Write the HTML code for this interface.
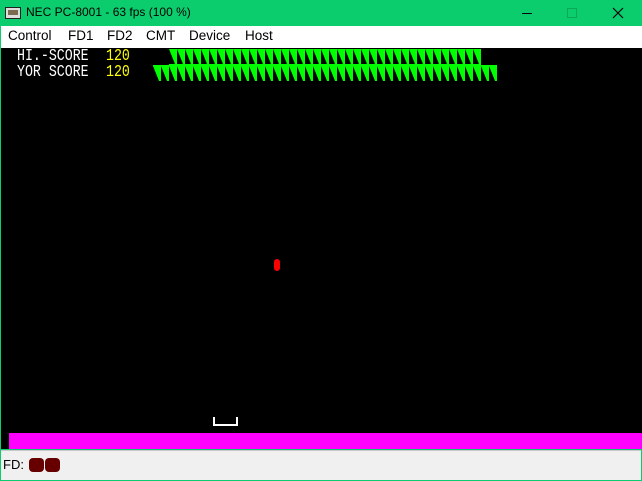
<!DOCTYPE html>
<html><head><meta charset="utf-8"><style>
*{margin:0;padding:0;box-sizing:border-box}
body{width:642px;height:481px;overflow:hidden;background:#0ccd6e;position:relative;font-family:"Segoe UI","Liberation Sans",sans-serif}
.title{position:absolute;left:0;top:0;width:642px;height:26px;background:#0ccd6e;font-size:12px;color:#000}
.menu{position:absolute;left:1px;top:26px;width:641px;height:22px;background:#fff;font-size:13.5px}
.menu span{position:absolute;top:2px}
.screen{position:absolute;left:1px;top:48px;width:641px;height:401px;background:#000}
.status{position:absolute;left:1px;top:450px;width:640px;height:30px;background:#f0f0f0;border-top:1px solid #c8c8c8;font-size:13px}
.pix{position:absolute;font-family:"Liberation Mono",monospace;font-size:17px;line-height:16px;transform:scaleX(0.78);transform-origin:left top;letter-spacing:0}
</style></head><body>
<div class="title">
<svg style="position:absolute;left:5px;top:7px" width="16" height="12"><rect x="0.5" y="0.5" width="15" height="11" fill="#ddd" stroke="#222"/><rect x="3" y="3" width="10" height="5" fill="#7a6a50"/></svg>
<span style="position:absolute;left:26px;top:5px">NEC PC-8001 - 63 fps (100 %)</span>
<div style="position:absolute;left:522px;top:13px;width:10px;height:1px;background:#000"></div>
<div style="position:absolute;left:567px;top:8px;width:10px;height:10px;border:1px solid #0aa858"></div>
<svg style="position:absolute;left:612px;top:7px" width="12" height="12"><path d="M1 1L11 11M11 1L1 11" stroke="#000" stroke-width="1.2"/></svg>
</div>
<div class="menu">
<span style="left:7px">Control</span><span style="left:67px">FD1</span><span style="left:106px">FD2</span><span style="left:145px">CMT</span><span style="left:188px">Device</span><span style="left:244px">Host</span>
</div>
<div class="screen">
<div class="pix" style="left:16px;top:1px;color:#fff">HI.-SCORE</div>
<div class="pix" style="left:105px;top:1px;color:#ff0">120</div>
<div class="pix" style="left:16px;top:17px;color:#fff">YOR SCORE</div>
<div class="pix" style="left:105px;top:17px;color:#ff0">120</div>
<svg style="position:absolute;left:0;top:0" width="641" height="40">
<defs><pattern id="t" width="8" height="16" patternUnits="userSpaceOnUse"><rect width="8" height="16" fill="#00ff00"/><polygon points="0,1 0,16 6,16" fill="#000"/></pattern>
<pattern id="t2" x="0" y="17" width="8" height="16" patternUnits="userSpaceOnUse"><rect width="8" height="16" fill="#00ff00"/><polygon points="0,1 0,16 6,16" fill="#000"/></pattern></defs>
<rect x="168" y="1" width="312" height="16" fill="url(#t)"/>
<rect x="152" y="17" width="344" height="16" fill="url(#t2)"/>
</svg>
<div style="position:absolute;left:273px;top:211px;width:6px;height:12px;background:#f00;border-radius:3px"></div>
<div style="position:absolute;left:212px;top:369px;width:25px;height:9px;border:2px solid #fff;border-top:none"></div>
<div style="position:absolute;left:8px;top:385px;width:633px;height:16px;background:#f0f"></div>
</div>
<div class="status">
<span style="position:absolute;left:2px;top:6px">FD:</span>
<div style="position:absolute;left:28px;top:7px;width:15px;height:14px;background:#600;border-radius:4px"></div>
<div style="position:absolute;left:44px;top:7px;width:15px;height:14px;background:#600;border-radius:4px"></div>
</div>
</body></html>
